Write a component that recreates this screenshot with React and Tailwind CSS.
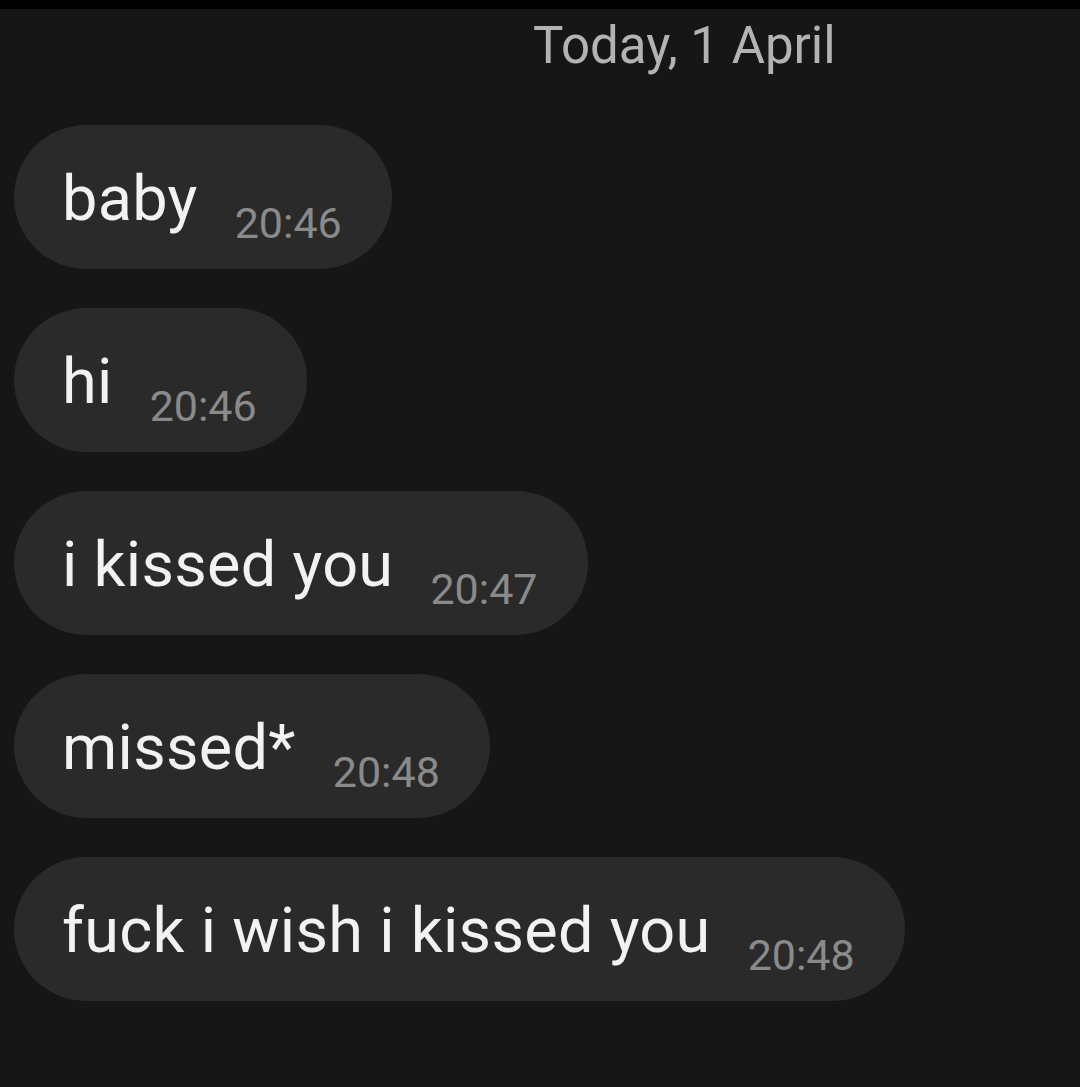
const messages = [
  { text: 'baby', time: '20:46' },
  { text: 'hi', time: '20:46' },
  { text: 'i kissed you', time: '20:47' },
  { text: 'missed*', time: '20:48' },
  { text: 'fuck i wish i kissed you', time: '20:48' },
];

const Bubble = ({ text, time }) => (
  <div className="flex items-end h-[144px] w-fit rounded-full bg-[#2a2a2a] pl-[48px] pr-[50px] pb-[24px]">
    <span className="mb-[15px] text-[63px] leading-none text-[#f2f2f2] tracking-[0.3px]">{text}</span>
    <span className="ml-[37px] text-[43px] leading-none text-[#8a8a8a]">{time}</span>
  </div>
);

export default function App() {
  return (
    <div className="min-h-[1087px] w-[1080px] bg-[#161616] font-['Roboto',_'Liberation_Sans',_sans-serif]">
      <div className="h-[9px] bg-black"></div>
      <div className="pt-[11px] pl-[533px]">
        <span className="text-[51px] leading-none text-[#b3b3b3]">Today, 1 April</span>
      </div>
      <div className="mt-[54px] flex flex-col gap-[39px] pl-[14px]">
        {messages.map((m, i) => (
          <Bubble key={i} text={m.text} time={m.time} />
        ))}
      </div>
    </div>
  );
}
